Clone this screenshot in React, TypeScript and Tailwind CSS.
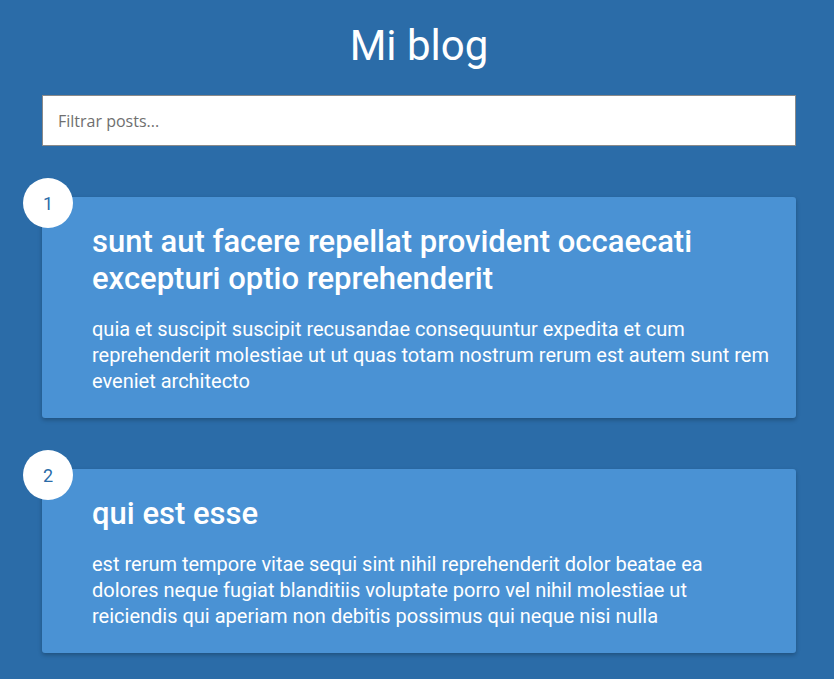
import React from "react";

const posts = [
  {
    id: 1,
    title: "sunt aut facere repellat provident occaecati excepturi optio reprehenderit",
    body: "quia et suscipit suscipit recusandae consequuntur expedita et cum reprehenderit molestiae ut ut quas totam nostrum rerum est autem sunt rem eveniet architecto",
  },
  {
    id: 2,
    title: "qui est esse",
    body: "est rerum tempore vitae sequi sint nihil reprehenderit dolor beatae ea dolores neque fugiat blanditiis voluptate porro vel nihil molestiae ut reiciendis qui aperiam non debitis possimus qui neque nisi nulla",
  },
];

const App = () => {
  return (
    <div className="min-h-screen bg-[#2b6ca8] pr-[38px] pb-10 pl-[42px] font-['Roboto',sans-serif] text-white">
      <h1 className="pt-[22px] text-center text-[42px] leading-[48px] font-normal">Mi blog</h1>

      <input
        type="text"
        placeholder="Filtrar posts..."
        className="mt-[25px] block h-[51px] w-full border border-[#8a8a8a] bg-white px-[15px] font-['Open_Sans',sans-serif] text-[16px] text-black placeholder:text-[#6f6f6f] outline-none"
      />

      <ul className="mt-[51px] flex flex-col gap-[51px]">
        {posts.map((post) => (
          <li
            key={post.id}
            className="relative rounded-[3px] bg-[#4a92d4] pt-[26px] pr-6 pb-6 pl-[50px] shadow-[0_2px_4px_rgba(0,0,0,0.25)]"
          >
            <span className="absolute -top-[19px] -left-[19px] flex h-[50px] w-[50px] items-center justify-center rounded-full bg-white text-[18px] text-[#2b6ca8]">
              {post.id}
            </span>
            <h2 className="text-[31px] leading-[37px] font-medium">{post.title}</h2>
            <p className="mt-[19px] text-[20px] leading-[26px]">{post.body}</p>
          </li>
        ))}
      </ul>
    </div>
  );
};

export default App;
